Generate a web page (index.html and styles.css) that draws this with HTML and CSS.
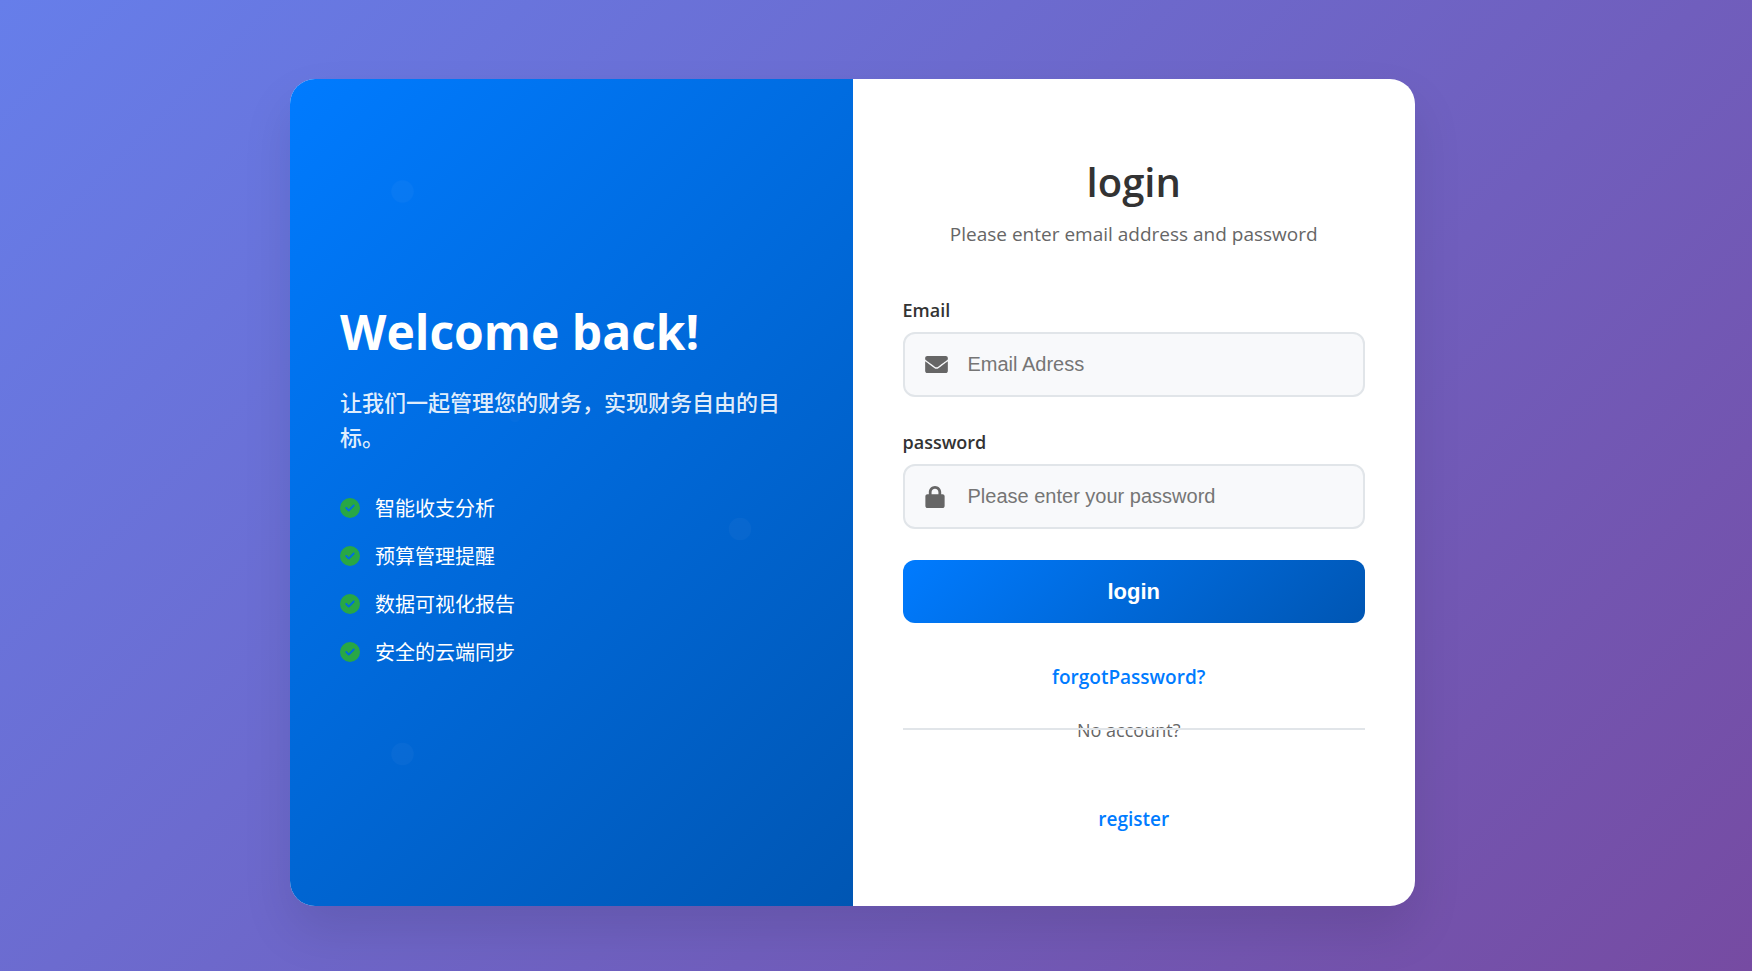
FILE: index.html
```html
<!DOCTYPE html>
<html lang="zh-CN">
<head>
<meta charset="utf-8">
<meta name="viewport" content="width=device-width, initial-scale=1">
<title>login</title>
<link rel="stylesheet" href="styles.css">
</head>
<body>
<svg class="sprite" aria-hidden="true">
  <symbol id="check" viewBox="0 0 512 512"><path d="M256 512A256 256 0 1 0 256 0a256 256 0 1 0 0 512zM369 209L241 337c-9.400 9.400-24.600 9.400-33.900 0l-64-64c-9.400-9.400-9.400-24.600 0-33.900s24.600-9.400 33.900 0l47 47L335 175c9.400-9.400 24.600-9.400 33.900 0s9.400 24.600 0 33.900z"/></symbol>
</svg>
<main class="card">
  <section class="welcome">
    <svg class="dots" viewBox="0 0 100 100" aria-hidden="true">
      <circle cx="20" cy="20" r="2"/><circle cx="80" cy="80" r="2"/><circle cx="40" cy="60" r="1" opacity="0.6"/><circle cx="20" cy="120" r="2"/>
    </svg>
    <h1 class="welcome-title">Welcome back!</h1>
    <p class="welcome-text">让我们一起管理您的财务，实现财务自由的目标。</p>
    <ul class="features">
      <li><svg class="tick" aria-hidden="true"><use href="#check"/></svg>智能收支分析</li>
      <li><svg class="tick" aria-hidden="true"><use href="#check"/></svg>预算管理提醒</li>
      <li><svg class="tick" aria-hidden="true"><use href="#check"/></svg>数据可视化报告</li>
      <li><svg class="tick" aria-hidden="true"><use href="#check"/></svg>安全的云端同步</li>
    </ul>
  </section>
  <section class="panel">
    <header class="heading">
      <h2>login</h2>
      <p>Please enter email address and password</p>
    </header>
    <form>
      <div class="field">
        <label for="email">Email</label>
        <div class="control">
          <svg class="icon-mail" viewBox="0 0 512 384" aria-hidden="true"><path d="M502 127c4-3 10 0 10 5v204c0 27-21 48-48 48H48c-27 0-48-21-48-48V132c0-5 6-8 10-5 22 18 52 40 155 115 21 15 57 48 91 48s71-33 91-48c103-75 133-97 155-115z"/><path d="M256 256c23 0 57-30 74-42C464 117 474 108 505 84c5-5 7-12 7-19V48c0-27-21-48-48-48H48C21 0 0 21 0 48v17c0 7 2 14 7 19 31 24 41 33 175 130 17 12 51 42 74 42z"/></svg>
          <input id="email" type="email" placeholder="Email Adress">
        </div>
      </div>
      <div class="field">
        <label for="password">password</label>
        <div class="control">
          <svg class="icon-lock" viewBox="0 0 448 512" aria-hidden="true"><path d="M144 144v48H304V144c0-44.200-35.800-80-80-80s-80 35.800-80 80zM80 192V144C80 64.500 144.500 0 224 0s144 64.500 144 144v48h32c26 0 48 22 48 48V464c0 26-22 48-48 48H48c-26 0-48-22-48-48V240c0-26 22-48 48-48H80z"/></svg>
          <input id="password" type="password" placeholder="Please enter your password">
        </div>
      </div>
      <button class="submit" type="submit">login</button>
    </form>
    <a class="link forgot" href="#forgot">forgotPassword?</a>
    <div class="divider"><span>No account?</span></div>
    <a class="link" href="#register">register</a>
  </section>
</main>
</body>
</html>
```
FILE: styles.css
```css
* { box-sizing: border-box; margin: 0; padding: 0; }
body {
  min-height: 100vh;
  padding: 79px 71px 65px 24px;
  background: linear-gradient(135deg, #667eea 0%, #764ba2 100%);
  font-family: "Open Sans", "Noto Sans CJK SC", sans-serif;
  font-size: 20px;
  color: #333;
}
.sprite { display: none; }
.card {
  display: grid;
  grid-template-columns: 1fr 1fr;
  max-width: 1125px;
  margin: 0 auto;
  background: #fff;
  border-radius: 25px;
  overflow: hidden;
  box-shadow: 0 25px 50px rgba(0, 0, 0, 0.1);
}
.welcome {
  position: relative;
  display: flex;
  flex-direction: column;
  justify-content: center;
  padding: 50px;
  overflow: hidden;
  color: #fff;
  background: linear-gradient(135deg, #007bff, #0056b3);
}
.dots {
  position: absolute;
  top: 0;
  left: 0;
  width: 100%;
  overflow: visible;
  fill: #fff;
  fill-opacity: 0.03;
}
.welcome-title { font-size: 48px; line-height: 60px; margin-bottom: 23px; }
.welcome-text {
  font-size: 22px;
  line-height: 35px;
  font-weight: 500;
  margin-bottom: 39px;
  color: rgba(255, 255, 255, 0.9);
}
.features { list-style: none; }
.features li {
  display: flex;
  align-items: center;
  gap: 15px;
  height: 28px;
  margin-bottom: 20px;
}
.features li:last-child { margin-bottom: 18px; }
.tick { width: 20px; height: 20px; fill: #28a745; }
.panel {
  display: flex;
  flex-direction: column;
  align-items: center;
  padding: 75px 50px 73px;
}
.heading { text-align: center; margin-bottom: 48px; }
.heading h2 { font-size: 40px; line-height: 56px; font-weight: 600; margin-bottom: 10px; }
.heading p { font-size: 19px; line-height: 28px; color: #666; }
form { width: 100%; }
.field { margin-bottom: 31px; }
.field label {
  display: block;
  margin-bottom: 8px;
  font-size: 18px;
  line-height: 28px;
  font-weight: 600;
}
.control {
  display: flex;
  align-items: center;
  gap: 20px;
  height: 65px;
  padding: 0 20px;
  border: 2px solid #e1e5e9;
  border-radius: 12px;
  background: #f8f9fb;
}
.control svg { fill: #666; }
.icon-mail { width: 23px; height: 17px; }
.icon-lock { width: 20px; height: 22px; }
.icon-lock + input { margin-left: 3px; }
.control input {
  flex: 1;
  min-width: 0;
  border: 0;
  outline: 0;
  background: none;
  font: 20px "Liberation Sans", sans-serif;
}
.control input::placeholder { color: #757575; }
.submit {
  width: 100%;
  height: 63px;
  border: 0;
  border-radius: 12px;
  color: #fff;
  background: linear-gradient(135deg, #007bff, #0056b3);
  font: bold 22px "Liberation Sans", sans-serif;
}
.link {
  color: #007bff;
  font-size: 19px;
  line-height: 28px;
  font-weight: 600;
  text-decoration: none;
}
.forgot { margin: 40px 0 27px; padding-right: 10px; }
.divider {
  position: relative;
  width: 100%;
  margin-bottom: 63px;
  padding-right: 10px;
  text-align: center;
  font-size: 18px;
  line-height: 24px;
  color: #666;
}
.divider::after {
  content: "";
  position: absolute;
  left: 0;
  right: 0;
  top: 10px;
  height: 2px;
  background: #e1e5e9;
}
```
